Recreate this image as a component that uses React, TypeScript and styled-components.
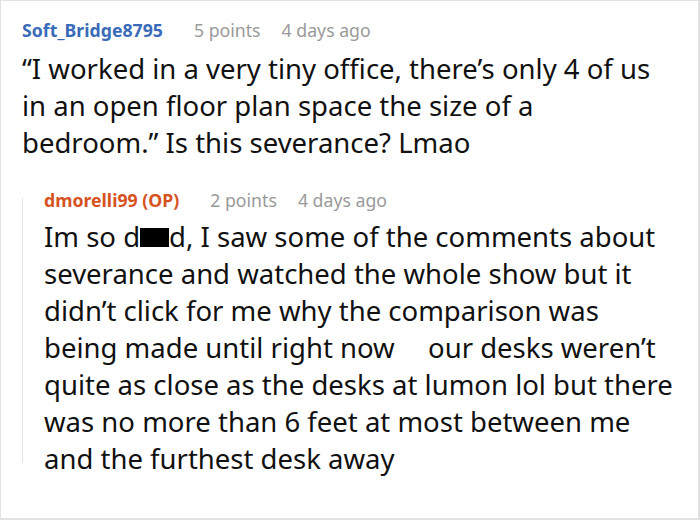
import React from "react";
import styled, { createGlobalStyle } from "styled-components";

const Global = createGlobalStyle`
  html, body { margin: 0; padding: 0; background: #fff; }
  body { font-family: "Noto Sans", "Open Sans", sans-serif; }
`;

const Frame = styled.div`
  box-sizing: border-box;
  width: 700px;
  height: 520px;
  border: 1px solid #e2e2e2;
  border-right-width: 2px;
  border-bottom-width: 2px;
  padding: 14px 0 0 21px;
  overflow: hidden;
`;

const Meta = styled.div`
  display: flex;
  align-items: baseline;
  gap: 21px;
  font-size: 17.7px;
  line-height: 30px;
  color: #9a9a9a;
`;

const User = styled.span<{ $op?: boolean }>`
  font-weight: 700;
  color: ${({ $op }) => ($op ? "#d6531f" : "#3a6bb8")};
  margin-right: 10px;
`;

const Body = styled.p`
  margin: 5px 0 0;
  font-size: 27.5px;
  line-height: 37px;
  color: #111;
  white-space: nowrap;
`;

const Thread = styled.div`
  position: relative;
  margin-top: 24px;
  padding-left: 22px;

  &::before {
    content: "";
    position: absolute;
    left: 0;
    top: 13px;
    bottom: 14px;
    width: 1px;
    background: #e4e4e4;
  }

  ${Body} {
    margin-top: 3px;
  }
`;

const Redacted = styled.span`
  display: inline-block;
  width: 29px;
  height: 19px;
  background: #000;
`;

const Gap = styled.span`
  display: inline-block;
  width: 19px;
`;

export default function App() {
  return (
    <>
      <Global />
      <Frame>
        <Meta>
          <User>Soft_Bridge8795</User>
          <span>5 points</span>
          <span>4 days ago</span>
        </Meta>
        <Body>
          “I worked in a very tiny office, there’s only 4 of us
          <br />
          in an open floor plan space the size of a
          <br />
          bedroom.” Is this severance? Lmao
        </Body>
        <Thread>
          <Meta>
            <User $op>dmorelli99 (OP)</User>
            <span>2 points</span>
            <span>4 days ago</span>
          </Meta>
          <Body>
            Im so d<Redacted />d, I saw some of the comments about
            <br />
            severance and watched the whole show but it
            <br />
            didn’t click for me why the comparison was
            <br />
            being made until right now <Gap /> our desks weren’t
            <br />
            quite as close as the desks at lumon lol but there
            <br />
            was no more than 6 feet at most between me
            <br />
            and the furthest desk away
          </Body>
        </Thread>
      </Frame>
    </>
  );
}
